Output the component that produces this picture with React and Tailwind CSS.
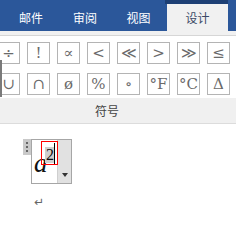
const row1 = ["÷", "!", "∝", "<", "≪", ">", "≫", "≤"];
const row2 = ["∪", "∩", "ø", "%", "∘", "°F", "°C", "Δ"];

const tabs = [
  { label: "邮件", w: "w-[54px]" },
  { label: "审阅", w: "w-[54px]" },
  { label: "视图", w: "w-[53px]" },
];

function SymbolRow({ items }) {
  return (
    <div className="flex gap-[7px] ml-[-3px]">
      {items.map((s) => (
        <div
          key={s}
          className="w-[23px] h-[22px] shrink-0 border border-[#b4b4b4] bg-white flex items-center justify-center text-[15px] leading-none text-[#6a6a6a] font-['DejaVu_Serif',serif]"
        >
          {s}
        </div>
      ))}
    </div>
  );
}

export default function App() {
  return (
    <div className="w-[236px] h-[229px] bg-white overflow-hidden relative font-['Noto_Sans_CJK_SC',sans-serif]">
      {/* ribbon tabs */}
      <div className="flex h-[31px] bg-[#2b579a] pl-[4px]">
        {tabs.map((t) => (
          <div
            key={t.label}
            className={`${t.w} flex items-center justify-center text-[12px] text-white pt-[5px]`}
          >
            {t.label}
          </div>
        ))}
        <div className="w-[63px] flex flex-col">
          <div className="h-[4px] bg-[#1d3f74]" />
          <div className="flex-1 ml-[2px] bg-[#f1f1f1] flex items-center justify-center text-[12px] text-[#3c4a66] pt-[1px]">
            设计
          </div>
        </div>
      </div>
      <div className="h-[5px] bg-[#f1f1f1] border-b border-[#d6d6d6]" />

      {/* symbol gallery */}
      <div className="relative pt-[6px] h-[62px] flex flex-col gap-[9px]">
        <SymbolRow items={row1} />
        <SymbolRow items={row2} />
        <div className="absolute left-0 top-[24px] w-[2px] h-[37px] bg-[#7a7a7a]" />
      </div>
      <div className="h-[26px] bg-[#f0f0f0] border-b border-[#dcdcdc] flex items-center pl-[95px] text-[12px] text-[#444]">
        符号
      </div>

      {/* document */}
      <div className="pl-[23px] pt-[15px]">
        <div className="flex">
          <div className="w-[8px] h-[16px] bg-[#c9c9c9] flex flex-col items-center justify-center gap-[2px]">
            <div className="w-[2px] h-[2px] bg-[#666]" />
            <div className="w-[2px] h-[2px] bg-[#666]" />
            <div className="w-[2px] h-[2px] bg-[#666]" />
          </div>
          <div className="w-[41px] h-[45px] border border-[#a6a6a6] flex">
            <div className="w-[25px] relative">
              <span className="absolute left-[2px] top-[10px] text-[27px] leading-none italic text-[#111] font-['Liberation_Serif',serif]">
                a
              </span>
              <div className="absolute left-[9px] top-[1px] w-[17px] h-[24px] border border-[#ff0000] flex items-end">
                <span className="ml-[3px] mb-[1px] px-[1px] bg-[#cfcfcf] text-[16px] leading-[16px] text-[#111] font-['Liberation_Serif',serif]">
                  2
                </span>
                <div className="absolute left-[12px] top-[1px] w-[1px] h-[21px] bg-black" />
              </div>
            </div>
            <div className="flex-1 bg-[#e1e1e1] border-l border-[#cfcfcf] flex items-end justify-center pb-[6px]">
              <div className="w-0 h-0 border-l-[3px] border-r-[3px] border-t-[4px] border-l-transparent border-r-transparent border-t-[#333]" />
            </div>
          </div>
        </div>
        <div className="ml-[11px] mt-[12px] text-[12px] leading-none text-[#666] font-['DejaVu_Sans',sans-serif]">
          ↵
        </div>
      </div>
    </div>
  );
}
